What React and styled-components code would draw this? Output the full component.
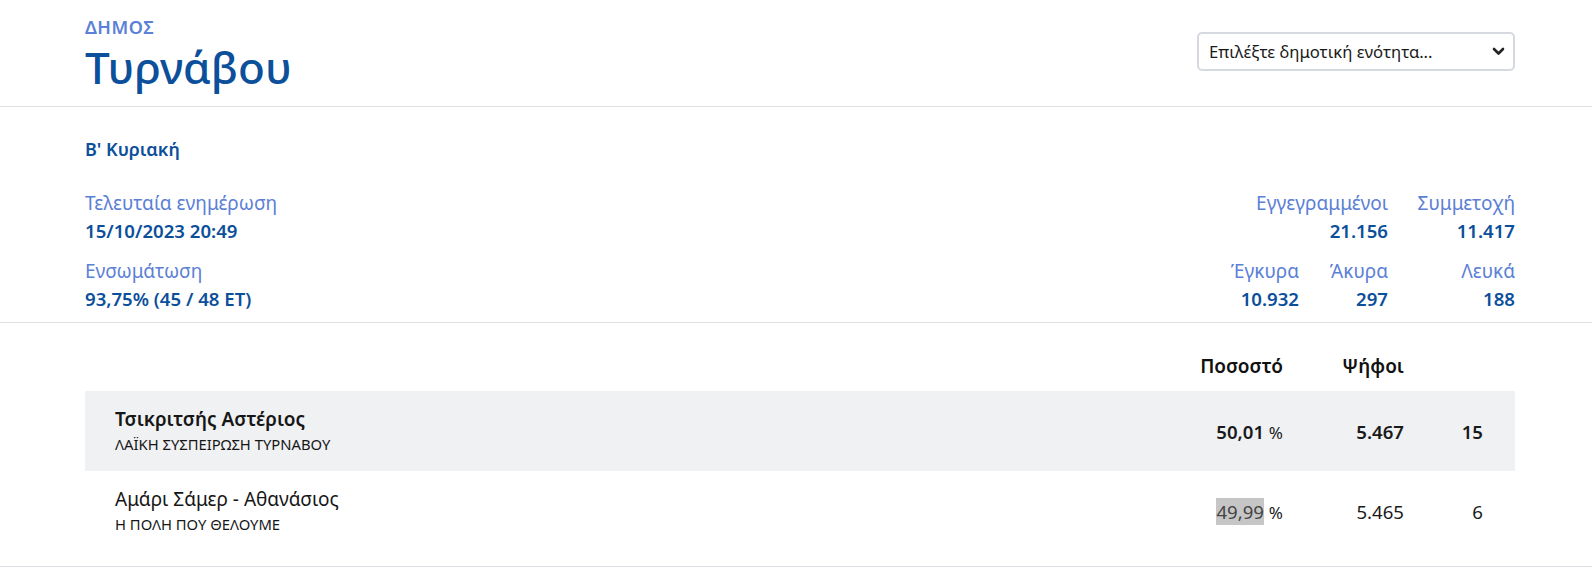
import styled, { createGlobalStyle } from "styled-components"

const GlobalStyle = createGlobalStyle`
    html, body {
        margin: 0;
        padding: 0;
        background: #ffffff;
    }
    body {
        font-family: "Noto Sans", "Open Sans", sans-serif;
        color: #1b1b1b;
    }
    * {
        box-sizing: border-box;
    }
`

const Page = styled.div`
    width: 100%;
`

const Band = styled.section`
    border-bottom: 1px solid #dedfe5;
`

const Inner = styled.div`
    width: 1430px;
    margin-left: 85px;
`

const HeaderInner = styled(Inner)`
    height: 106px;
    display: flex;
    justify-content: space-between;
    align-items: flex-start;
`

const Titles = styled.div`
    display: flex;
    flex-direction: column;
    padding-top: 17px;
`

const Kicker = styled.div`
    font-size: 18px;
    line-height: 20px;
    font-weight: 600;
    color: #5b80d6;
    letter-spacing: 0.5px;
`

const Title = styled.h1`
    margin: 8px 0 0;
    font-size: 44px;
    line-height: 44px;
    font-weight: 500;
    color: #0c4f9b;
`

const SelectWrap = styled.div`
    position: relative;
    margin-top: 32px;
    width: 318px;
`

const Select = styled.select`
    appearance: none;
    width: 100%;
    height: 39px;
    padding: 0 34px 0 10px;
    font-family: "Noto Sans", sans-serif;
    font-size: 16.7px;
    color: #1a1a1a;
    background: #fff;
    border: 2px solid #d6d9df;
    border-radius: 5px;
`

const Chevron = styled.svg`
    position: absolute;
    right: 10px;
    top: 15px;
    pointer-events: none;
`

const StatsInner = styled(Inner)`
    padding: 30px 0 9px;
    display: flex;
    flex-direction: column;
`

const Round = styled.div`
    font-size: 18px;
    line-height: 24px;
    font-weight: 600;
    color: #0c4f9b;
    margin-bottom: 28px;
`

const StatsRow = styled.div`
    display: flex;
    justify-content: space-between;
`

const InfoList = styled.div`
    display: flex;
    flex-direction: column;
    gap: 12px;
`

const InfoBlock = styled.div`
    display: flex;
    flex-direction: column;
`

const Label = styled.div`
    font-size: 19px;
    line-height: 28px;
    color: #5b80d6;
    white-space: nowrap;
`

const Value = styled.div`
    font-size: 18.6px;
    line-height: 28px;
    font-weight: 600;
    color: #0c4f9b;
    white-space: nowrap;
`

const Counts = styled.div`
    display: grid;
    grid-template-columns: 120px 89px 127px;
    row-gap: 12px;
`

const CountCell = styled(InfoBlock)`
    align-items: flex-end;
    grid-column: ${p => p.$span || "auto"};
`

const TableInner = styled(Inner)`
    padding: 0 0 15px;
`

const Grid = styled.div`
    display: grid;
    grid-template-columns: 1fr 200px 121px 79px;
    align-items: ${p => p.$head ? "end" : "center"};
    padding: 0 32px 0 30px;
    background: ${p => p.$lead ? "#f0f1f3" : "transparent"};
    height: ${p => p.$head ? "68px" : "80px"};
`

const HeadCell = styled.div`
    text-align: right;
    font-size: 19px;
    line-height: 26px;
    font-weight: 600;
    color: #111;
    padding-bottom: 12px;
`

const Candidate = styled.div`
    display: flex;
    flex-direction: column;
`

const Name = styled.div`
    font-size: 19px;
    line-height: 26px;
    font-weight: ${p => p.$lead ? 600 : 400};
    color: #161616;
`

const Party = styled.div`
    font-size: 14.8px;
    line-height: 24px;
    color: #161616;
`

const Num = styled.div`
    text-align: right;
    font-size: 18.6px;
    font-weight: ${p => p.$lead ? 600 : 400};
    color: #1a1a1a;
`

const Pct = styled.span`
    background: ${p => p.$marked ? "#c6c6c6" : "transparent"};
    color: ${p => p.$marked ? "#444" : "inherit"};
    padding: 1px 0;
`

const Unit = styled.span`
    font-weight: 400;
    font-size: 17px;
`

const counts = [
    { label: "Εγγεγραμμένοι", value: "21.156", span: "1 / 3" },
    { label: "Συμμετοχή", value: "11.417" },
    { label: "Έγκυρα", value: "10.932" },
    { label: "Άκυρα", value: "297" },
    { label: "Λευκά", value: "188" },
]

const results = [
    { name: "Τσικριτσής Αστέριος", party: "ΛΑΪΚΗ ΣΥΣΠΕΙΡΩΣΗ ΤΥΡΝΑΒΟΥ", pct: "50,01", votes: "5.467", seats: 15, lead: true },
    { name: "Αμάρι Σάμερ - Αθανάσιος", party: "Η ΠΟΛΗ ΠΟΥ ΘΕΛΟΥΜΕ", pct: "49,99", votes: "5.465", seats: 6, marked: true },
]

const App = () => {
    return (
        <Page>
            <GlobalStyle />
            <Band>
                <HeaderInner>
                    <Titles>
                        <Kicker>ΔΗΜΟΣ</Kicker>
                        <Title>Τυρνάβου</Title>
                    </Titles>
                    <SelectWrap>
                        <Select defaultValue="">
                            <option value="">Επιλέξτε δημοτική ενότητα...</option>
                            <option value="tyrnavos">Τυρνάβου</option>
                            <option value="ampelonas">Αμπελώνα</option>
                        </Select>
                        <Chevron width="13" height="9" viewBox="0 0 13 9">
                            <path d="M2 2 L6.5 6.5 L11 2" fill="none" stroke="#222" strokeWidth="2.6" strokeLinecap="round" strokeLinejoin="round" />
                        </Chevron>
                    </SelectWrap>
                </HeaderInner>
            </Band>
            <Band>
                <StatsInner>
                    <Round>Β' Κυριακή</Round>
                    <StatsRow>
                        <InfoList>
                            <InfoBlock>
                                <Label>Τελευταία ενημέρωση</Label>
                                <Value>15/10/2023 20:49</Value>
                            </InfoBlock>
                            <InfoBlock>
                                <Label>Ενσωμάτωση</Label>
                                <Value>93,75% (45 / 48 ΕΤ)</Value>
                            </InfoBlock>
                        </InfoList>
                        <Counts>
                            {counts.map(c => (
                                <CountCell key={c.label} $span={c.span}>
                                    <Label>{c.label}</Label>
                                    <Value>{c.value}</Value>
                                </CountCell>
                            ))}
                        </Counts>
                    </StatsRow>
                </StatsInner>
            </Band>
            <Band>
                <TableInner>
                    <Grid $head>
                        <div />
                        <HeadCell>Ποσοστό</HeadCell>
                        <HeadCell>Ψήφοι</HeadCell>
                        <div />
                    </Grid>
                    {results.map(r => (
                        <Grid key={r.name} $lead={r.lead}>
                            <Candidate>
                                <Name $lead={r.lead}>{r.name}</Name>
                                <Party>{r.party}</Party>
                            </Candidate>
                            <Num $lead={r.lead}>
                                <Pct $marked={r.marked}>{r.pct}</Pct> <Unit>%</Unit>
                            </Num>
                            <Num $lead={r.lead}>{r.votes}</Num>
                            <Num $lead={r.lead}>{r.seats}</Num>
                        </Grid>
                    ))}
                </TableInner>
            </Band>
        </Page>
    )
}

export default App
